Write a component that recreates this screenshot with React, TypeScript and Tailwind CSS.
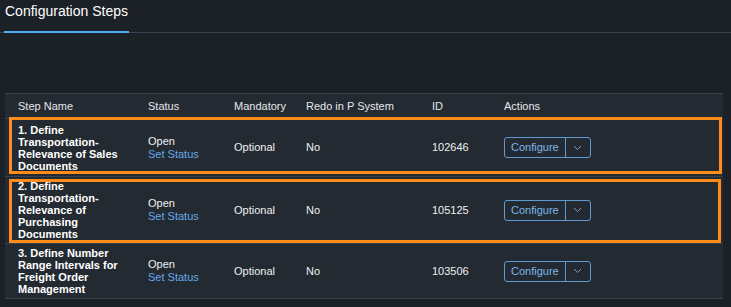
import React from 'react';

type Step = {
  name: string;
  id: string;
  h: string;
  box?: string;
};

const steps: Step[] = [
  {
    name: '1. Define Transportation-Relevance of Sales Documents',
    id: '102646',
    h: 'h-[58px]',
    box: 'top-[-2px] h-[57px] left-[4px] right-[1px]',
  },
  {
    name: '2. Define Transportation-Relevance of Purchasing Documents',
    id: '105125',
    h: 'h-[67px]',
    box: 'top-[2px] h-[64px] left-[4px] right-[2px]',
  },
  {
    name: '3. Define Number Range Intervals for Freight Order Management',
    id: '103506',
    h: 'h-[55px]',
  },
];

const cols = 'grid grid-cols-[138px_86px_72px_126px_72px_1fr]';

const Chevron: React.FC = () => (
  <svg width="9" height="6" viewBox="0 0 9 6" fill="none">
    <polyline points="1,1 4.5,4.5 8,1" stroke="#7d9bb8" strokeWidth="1" />
  </svg>
);

const App: React.FC = () => {
  return (
    <div
      className="w-[731px] h-[307px] bg-[#1c2127] text-[#eef0f2] overflow-hidden"
      style={{ fontFamily: '"Liberation Sans", Arial, sans-serif' }}
    >
      <div className="h-[33px] flex border-b border-[#3a4450]">
        <div className="ml-[4px] pl-[1px] pt-[1px] w-[125px] h-[33px] -mb-px border-b-2 border-[#4fb0f5] text-[14px] leading-[20px] text-white">
          Configuration Steps
        </div>
      </div>

      <div className="mt-[60px] ml-[5px] w-[718px] bg-[#242a31] border-t border-[#38434f] text-[11px]">
        <div className={`${cols} h-[25px] items-center border-b border-[#38434f] text-[#e4e7ea]`}>
          <div className="pl-[13px]">Step Name</div>
          <div className="pl-[5px]">Status</div>
          <div className="pl-[5px]">Mandatory</div>
          <div className="pl-[5px]">Redo in P System</div>
          <div className="pl-[5px]">ID</div>
          <div className="pl-[5px]">Actions</div>
        </div>

        {steps.map((s) => (
          <div
            key={s.id}
            className={`${cols} ${s.h} relative items-center border-b border-[#38434f]`}
          >
            <div className="pl-[13px] pr-[13px] font-bold leading-[12px] text-white">
              {s.name}
            </div>
            <div className="pl-[5px] leading-[13px]">
              <div>Open</div>
              <div className="text-[#62a9ea]">Set Status</div>
            </div>
            <div className="pl-[5px]">Optional</div>
            <div className="pl-[5px]">No</div>
            <div className="pl-[5px]">{s.id}</div>
            <div className="pl-[5px]">
              <div className="inline-flex h-[21px] rounded-[3px] border border-[#5f9bd0] text-[#7db6ea]">
                <span className="flex items-center px-[6px] border-r border-[#5f9bd0]">Configure</span>
                <span className="flex items-center justify-center w-[24px]">
                  <Chevron />
                </span>
              </div>
            </div>
            {s.box && (
              <span className={`absolute ${s.box} border-[3px] border-[#ff8c1a] pointer-events-none`} />
            )}
          </div>
        ))}
      </div>
    </div>
  );
};

export default App;
